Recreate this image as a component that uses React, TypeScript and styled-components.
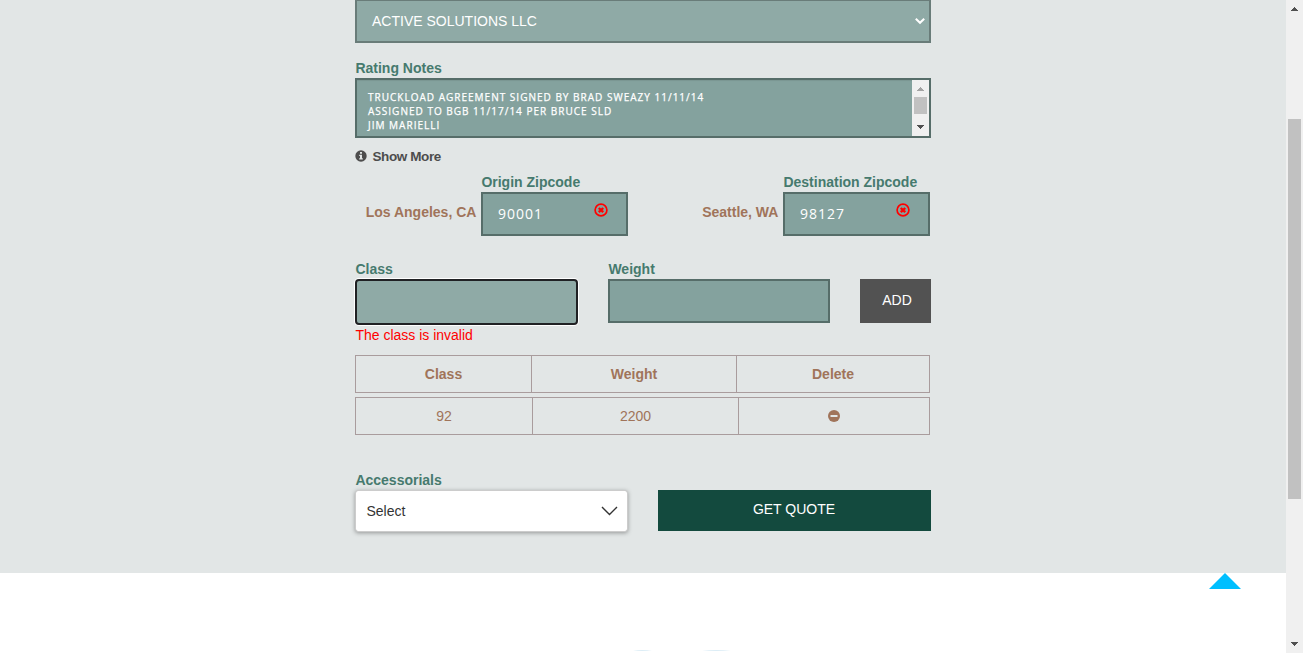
import React from "react";
import styled, { createGlobalStyle } from "styled-components";

const GlobalStyle = createGlobalStyle`
  * { box-sizing: border-box; }
  html, body { margin: 0; padding: 0; overflow: hidden; }
  body {
    background: #fff;
    font-family: "Liberation Sans", Arial, sans-serif;
    font-size: 14px;
    line-height: 20px;
    color: #4d4d4d;
  }
`;

const Screen = styled.div`
  display: flex;
  width: 1303px;
  height: 653px;
  overflow: hidden;
`;

const Page = styled.main`
  flex: 1;
  display: flex;
  flex-direction: column;
`;

const QuoteSection = styled.section`
  display: flex;
  justify-content: center;
  height: 573px;
  background: #e2e6e6;
`;

const Form = styled.form`
  display: flex;
  flex-direction: column;
  width: 576px;
`;

const Row = styled.div<{ $top?: number; $gap?: number }>`
  display: flex;
  margin-top: ${(p) => p.$top ?? 0}px;
  gap: ${(p) => p.$gap ?? 0}px;
`;

const Field = styled.div<{ $width?: number; $top?: number }>`
  display: flex;
  flex-direction: column;
  width: ${(p) => (p.$width ? `${p.$width}px` : "100%")};
  margin-top: ${(p) => p.$top ?? 0}px;
`;

const Label = styled.label`
  height: 20px;
  padding-left: 0.4px;
  font-weight: 700;
  color: #467a6e;
  white-space: nowrap;
`;

const CustomerSelect = styled.div`
  display: flex;
  align-items: center;
  justify-content: space-between;
  height: 43px;
  padding: 0 3px 0 15px;
  border: 2px solid #697c79;
  border-top-width: 1px;
  background: #8faaa6;
  color: #fff;
`;

const Notes = styled.div`
  display: flex;
  height: 60px;
  border: 2px solid #566d69;
  background: #84a29e;
  box-shadow: inset 0 1px 1px rgba(0, 0, 0, 0.075);
`;

const NotesText = styled.div`
  flex: 1;
  padding: 10px 11px 0;
  font-family: "Open Sans", sans-serif;
  font-size: 10px;
  line-height: 14px;
  letter-spacing: 1.01px;
  -webkit-text-stroke: 0.25px #fff;
  white-space: pre;
  color: #fff;
  overflow: hidden;
`;

const Track = styled.div`
  display: flex;
  flex-direction: column;
  align-items: center;
  width: 17px;
  background: #f0f0f0;
`;

const Arrow = styled.svg`
  display: block;
  flex: none;
  width: 17px;
  height: 17px;
`;

const Thumb = styled.div<{ $top?: number; $size: number }>`
  width: 13px;
  height: ${(p) => p.$size}px;
  margin-top: ${(p) => p.$top ?? 0}px;
  background: #c1c1c1;
`;

const TrackSpace = styled.div`
  flex: 1;
`;

const ShowMore = styled.div`
  display: flex;
  align-items: center;
  gap: 5.5px;
  height: 20px;
  margin-top: 8px;
  font-size: 13.5px;
  font-weight: 700;
  letter-spacing: -0.4px;
  color: #4d4d4d;
`;

const ShowMoreText = styled.span`
  padding-top: 1px;
`;

const ZipGroup = styled.div<{ $width: number }>`
  display: flex;
  justify-content: flex-end;
  width: ${(p) => p.$width}px;
`;

const City = styled.span`
  margin: 30px 4.6px 0 0;
  font-weight: 700;
  color: #a0745a;
  white-space: nowrap;
`;

const TextBox = styled.div`
  display: flex;
  justify-content: space-between;
  height: 44px;
  padding: 0 18px 0 15px;
  border: 2px solid #566d69;
  background: #84a29e;
  color: #fff;
  font-family: "Open Sans", sans-serif;
  line-height: 39px;
  letter-spacing: 1px;
`;

const ClearIcon = styled.svg`
  width: 14px;
  height: 14px;
  margin-top: 9px;
`;

const FocusedBox = styled.div`
  height: 46px;
  border: 2px solid #202124;
  border-radius: 4px;
  background: #8faaa6;
  box-shadow: 0 0 0 1px #fff;
`;

const ErrorText = styled.div`
  padding-left: 0.4px;
  color: #ff0000;
`;

const AddButton = styled.button`
  width: 71px;
  height: 44px;
  margin-top: 20px;
  padding: 0 0 2px 3px;
  border: 0;
  background: #525252;
  color: #fff;
  font: inherit;
`;

const GridRow = styled.div<{ $columns: string; $bold?: boolean; $top: number }>`
  display: grid;
  grid-template-columns: ${(p) => p.$columns};
  width: 575px;
  height: 38px;
  margin-top: ${(p) => p.$top}px;
  border: 1px solid #a99c9d;
  font-weight: ${(p) => (p.$bold ? 700 : 400)};
  color: #a0745a;
`;

const Cell = styled.div`
  display: flex;
  align-items: center;
  justify-content: center;
  & + & {
    border-left: 1px solid #a99c9d;
  }
`;

const Dropdown = styled.div`
  display: flex;
  align-items: center;
  justify-content: space-between;
  height: 42px;
  padding: 0 9px 0 10.4px;
  border: 1px solid #ccc;
  border-radius: 3px;
  background: #fff;
  background-clip: padding-box;
  box-shadow: 0 1px 4px rgba(0, 0, 0, 0.35);
  color: #333;
`;

const QuoteButton = styled.button`
  width: 273px;
  height: 41px;
  margin-top: 20px;
  padding: 0 1px 3px 0;
  border: 0;
  background: #134a3e;
  color: #fff;
  font: inherit;
`;

const Footer = styled.footer`
  display: flex;
  flex: 1;
  flex-direction: column;
  justify-content: space-between;
  background: #fff;
`;

const BackToTop = styled.svg`
  display: block;
  align-self: flex-end;
  width: 32px;
  height: 16px;
  margin-right: 45px;
`;

const FooterLogo = styled.svg`
  display: block;
  width: 100px;
  height: 4px;
  margin-left: 632px;
`;

const ScrollArrow = ({ down, color }: { down?: boolean; color: string }) => (
  <Arrow viewBox="0 0 17 17" shapeRendering="crispEdges">
    <path d={down ? "M5 6h7v1h-1v1h-1v1H9v1H8V9H7V8H6V7H5z" : "M5 11h7v-1h-1V9h-1V8H9V7H8v1H7v1H6v1H5z"} fill={color} />
  </Arrow>
);

const Clear = () => (
  <ClearIcon viewBox="0 0 14 14">
    <circle cx="7" cy="7" r="5.9" fill="none" stroke="#ff0000" strokeWidth="1.7" />
    <path d="M4.8 5l4.4 4.2M9.2 5L4.8 9.2" stroke="#ff0000" strokeWidth="2.4" />
  </ClearIcon>
);

export default function App() {
  return (
    <>
      <GlobalStyle />
      <Screen>
        <Page>
          <QuoteSection>
            <Form>
              <CustomerSelect>
                ACTIVE SOLUTIONS LLC
                <svg width="12" height="8" viewBox="0 0 12 8">
                  <path d="M1.8 1.7L6 5.8l4.2-4.1" fill="none" stroke="#fff" strokeWidth="2" />
                </svg>
              </CustomerSelect>
              <Field $top={15}>
                <Label>Rating Notes</Label>
                <Notes>
                  <NotesText>{"TRUCKLOAD AGREEMENT SIGNED BY BRAD SWEAZY 11/11/14\nASSIGNED TO BGB 11/17/14 PER BRUCE SLD\nJIM MARIELLI"}</NotesText>
                  <Track>
                    <ScrollArrow color="#a3a3a3" />
                    <Thumb $size={17} />
                    <TrackSpace />
                    <ScrollArrow down color="#505050" />
                  </Track>
                </Notes>
              </Field>
              <ShowMore>
                <svg width="12" height="12" viewBox="0 0 12 12">
                  <circle cx="6" cy="6" r="5.7" fill="#4d4d4d" />
                  <path d="M5 2h2v1.7H5zM4.2 4.8H7v3.5h.8v1.2H4.2V8.3H5V6h-.8z" fill="#e2e6e6" />
                </svg>
                <ShowMoreText>Show More</ShowMoreText>
              </ShowMore>
              <Row $top={6} $gap={29}>
                <ZipGroup $width={273}>
                  <City>Los Angeles, CA</City>
                  <Field $width={147}>
                    <Label>Origin Zipcode</Label>
                    <TextBox>90001<Clear /></TextBox>
                  </Field>
                </ZipGroup>
                <ZipGroup $width={273}>
                  <City>Seattle, WA</City>
                  <Field $width={147}>
                    <Label>Destination Zipcode</Label>
                    <TextBox>98127<Clear /></TextBox>
                  </Field>
                </ZipGroup>
              </Row>
              <Row $top={23} $gap={30}>
                <Field $width={223}>
                  <Label>Class</Label>
                  <FocusedBox />
                  <ErrorText>The class is invalid</ErrorText>
                </Field>
                <Field $width={222}>
                  <Label>Weight</Label>
                  <TextBox />
                </Field>
                <AddButton type="button">ADD</AddButton>
              </Row>
              <GridRow $columns="175px 205px 1fr" $bold $top={10}>
                <Cell>Class</Cell>
                <Cell>Weight</Cell>
                <Cell>Delete</Cell>
              </GridRow>
              <GridRow $columns="176px 206px 1fr" $top={4}>
                <Cell>92</Cell>
                <Cell>2200</Cell>
                <Cell>
                  <svg width="12" height="12" viewBox="0 0 12 12">
                    <circle cx="6" cy="6" r="6" fill="#a0745a" />
                    <path d="M2.5 5h7v2h-7z" fill="#e2e6e6" />
                  </svg>
                </Cell>
              </GridRow>
              <Row $top={35} $gap={30}>
                <Field $width={273}>
                  <Label>Accessorials</Label>
                  <Dropdown>
                    Select
                    <svg width="17" height="10" viewBox="0 0 17 10">
                      <path d="M1 1l7.5 7.6L16 1" fill="none" stroke="#333" strokeWidth="1.4" />
                    </svg>
                  </Dropdown>
                </Field>
                <QuoteButton type="button">GET QUOTE</QuoteButton>
              </Row>
            </Form>
          </QuoteSection>
          <Footer>
            <BackToTop viewBox="0 0 32 16">
              <path d="M16 0l16 16H0z" fill="#00bfff" />
            </BackToTop>
            <FooterLogo viewBox="0 0 100 4">
              <path d="M1 2Q10 0 20 2zM70 2Q84 0 99 2z" fill="#dcedf6" />
            </FooterLogo>
          </Footer>
        </Page>
        <Track>
          <ScrollArrow color="#505050" />
          <Thumb $top={102} $size={380} />
          <TrackSpace />
          <ScrollArrow down color="#505050" />
        </Track>
      </Screen>
    </>
  );
}
